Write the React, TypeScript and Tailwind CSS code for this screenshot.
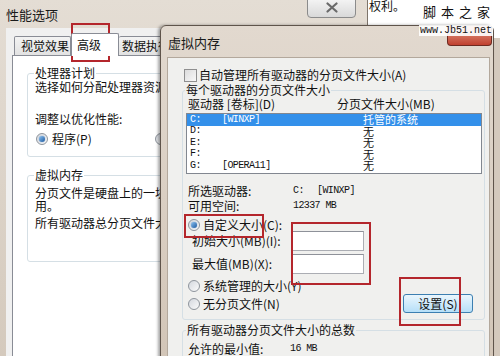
import React from 'react';

const cjk = "font-['Noto_Sans_CJK_SC','Noto_Sans_CJK_JP',sans-serif]";
const mono = "font-['Liberation_Mono','DejaVu_Sans_Mono',monospace] text-[10px] tracking-[-0.6px]";

const Radio = ({ checked = false }: { checked?: boolean }) => (
  <span className="flex h-[12px] w-[12px] shrink-0 items-center justify-center rounded-full border border-[#8e949c] bg-linear-to-br from-[#d4d8de] to-[#fbfbfb]">
    {checked && (
      <span className="h-[6px] w-[6px] rounded-full bg-linear-to-br from-[#8cc2f0] to-[#1b5aa0] shadow-[0_0_1px_#2a62a8]" />
    )}
  </span>
);

const Checkbox = () => (
  <span className="h-[13px] w-[13px] shrink-0 border border-[#8f8f8f] bg-linear-to-br from-[#dcdcdc] to-[#f8f8f8]" />
);

const GroupLabel = ({ children, bg }: { children: React.ReactNode; bg: string }) => (
  <div className={`-mt-[8px] flex h-[14px] w-fit items-center px-[1px] leading-none ${bg}`}>{children}</div>
);

const drives = [
  { d: 'C:', v: '[WINXP]', s: '托管的系统', sel: true },
  { d: 'D:', v: '', s: '无', sel: false },
  { d: 'E:', v: '', s: '无', sel: false },
  { d: 'F:', v: '', s: '无', sel: false },
  { d: 'G:', v: '[OPERA11]', s: '无', sel: false },
];

const PerformanceOptions = () => (
  <div className="absolute left-0 top-0 h-[380px] w-[368px] border-r border-[#7d746b] bg-linear-to-b from-[#e4ddd4] to-[#d3c8bb]">
    {/* title bar */}
    <div className="flex h-[28px] items-start justify-between">
      <span className="ml-[6px] mt-[8px] text-[13px] leading-none text-[#1a1a1a]">性能选项</span>
      <div className="-mt-[3px] mr-[11px] flex h-[21px] w-[49px] items-center justify-center rounded-b-[4px] border border-[#8b8b8b] bg-linear-to-b from-[#f6f6f6] to-[#d9d9d9]">
        <svg width="12" height="11" viewBox="0 0 12 11">
          <path d="M1.5 1.5 L10.5 9.5 M10.5 1.5 L1.5 9.5" stroke="#6a6a6a" strokeWidth="2.2" strokeLinecap="round" />
        </svg>
      </div>
    </div>
    {/* client */}
    <div className="ml-[6px] h-[360px] w-[355px] bg-[#f0f0f0] pt-[5px]">
      <div className="flex h-[22px] items-end pl-[8px]">
        <div className="flex h-[19px] w-[57px] items-center rounded-t-[2px] border border-b-0 border-[#898c95] bg-linear-to-b from-[#f3f3f3] to-[#e2e2e2] pl-[6px] leading-none">
          视觉效果
        </div>
        <div className="relative z-10 -mb-[1px] flex h-[23px] w-[48px] items-center rounded-t-[2px] border border-b-0 border-[#898c95] bg-white pl-[5px] leading-none">
          高级
        </div>
        <div className="flex h-[19px] w-[90px] items-center rounded-t-[2px] border border-b-0 border-l-0 border-[#898c95] bg-linear-to-b from-[#f3f3f3] to-[#e2e2e2] pl-[3px] leading-none whitespace-nowrap">
          数据执行保护
        </div>
      </div>
      <div className="ml-[6px] h-[320px] w-[345px] border border-[#898c95] bg-white">
        <div className="ml-[14px] mt-[17px] w-[316px] rounded-[3px] border border-[#d5dfe5] pb-[10px]">
          <div className="ml-[6px]">
            <GroupLabel bg="bg-white">处理器计划</GroupLabel>
          </div>
          <div className="ml-[7px] flex h-[14px] items-center leading-none whitespace-nowrap">选择如何分配处理器资源。</div>
          <div className="ml-[7px] mt-[18px] flex h-[14px] items-center leading-none">调整以优化性能:</div>
          <div className="ml-[8px] mt-[6px] flex h-[14px] items-center leading-none">
            <div className="flex w-[119px] items-center gap-[4px]">
              <Radio checked />
              <span>程序(P)</span>
            </div>
            <div className="flex items-center gap-[4px]">
              <Radio />
              <span>后台服务(S)</span>
            </div>
          </div>
        </div>
        <div className="ml-[14px] mt-[18px] w-[316px] rounded-[3px] border border-[#d5dfe5] pb-[31px]">
          <div className="ml-[6px]">
            <GroupLabel bg="bg-white">虚拟内存</GroupLabel>
          </div>
          <div className="ml-[7px] mt-[4px] flex h-[13px] items-center leading-none whitespace-nowrap">分页文件是硬盘上的一块区域，Windows 当作 RAM 使</div>
          <div className="ml-[7px] flex h-[13px] items-center leading-none">用。</div>
          <div className="ml-[7px] mt-[4px] flex h-[14px] items-center leading-none whitespace-nowrap">所有驱动器总分页文件大小:</div>
        </div>
      </div>
    </div>
  </div>
);

const VirtualMemory = () => (
  <div className="absolute left-[160px] top-[25px] h-[340px] w-[334px] rounded-t-[6px] border border-[#5f544b] bg-linear-to-b from-[#e2d9cf] to-[#d2c5b7] shadow-[-2px_0_3px_rgba(0,0,0,0.35)]">
    <div className="flex h-[31px] items-start justify-between">
      <span className="ml-[7px] mt-[10px] text-[13px] leading-none text-[#1a1a1a]">虚拟内存</span>
      <div className="mr-[1px] h-[20px] w-[45px] rounded-b-[4px] border border-t-0 border-[#6e2a20] bg-linear-to-b from-[#e39a88] to-[#c0402f]" />
    </div>
    <div className="ml-[6px] h-[310px] w-[323px] border border-[#b3a89c] bg-[#f0f0ee]">
      <div className="ml-[16px] mt-[10px] flex h-[14px] items-center gap-[2px] leading-none">
        <Checkbox />
        <span>自动管理所有驱动器的分页文件大小(A)</span>
      </div>

      <div className="ml-[14px] mt-[8px] w-[303px] rounded-[3px] border border-[#d5dfe5] pb-[6px]">
        <div className="ml-[2px]">
          <GroupLabel bg="bg-[#f0f0ee]">每个驱动器的分页文件大小</GroupLabel>
        </div>
        <div className="flex h-[14px] items-center pl-[5px] leading-none">
          <span className="w-[149px]">驱动器 [卷标](D)</span>
          <span>分页文件大小(MB)</span>
        </div>
        <div className="ml-[3px] mt-[2px] h-[61px] w-[296px] border border-[#828790] bg-white">
          {drives.map((r) => (
            <div
              key={r.d}
              className={`flex h-[11.5px] items-center leading-none ${r.sel ? 'bg-[#3390ea] text-white' : 'text-[#111]'}`}
            >
              <span className={`w-[35px] pl-[3px] ${mono}`}>{r.d}</span>
              <span className={`w-[141px] ${mono}`}>{r.v}</span>
              <span className="text-[11px]">{r.s}</span>
            </div>
          ))}
        </div>

        <div className="mt-[9px] flex h-[15px] items-center leading-none">
          <span className="w-[110px] pl-[5px]">所选驱动器:</span>
          <span className={`w-[24px] ${mono}`}>C:</span>
          <span className={mono}>[WINXP]</span>
        </div>
        <div className="flex h-[15px] items-center leading-none">
          <span className="w-[110px] pl-[5px]">可用空间:</span>
          <span className={mono}>12337 MB</span>
        </div>
        <div className="mt-[6px] flex h-[12px] items-center gap-[3px] pl-[5px] leading-none">
          <Radio checked />
          <span>自定义大小(C):</span>
        </div>
        <div className="flex h-[20px] items-center leading-none">
          <span className="w-[108px] pl-[9px]">初始大小(MB)(I):</span>
          <div className="h-[20px] w-[73px] border border-[#abadb3] border-t-[#8e9199] bg-white" />
        </div>
        <div className="mt-[3px] flex h-[20px] items-center leading-none">
          <span className="w-[108px] pl-[9px]">最大值(MB)(X):</span>
          <div className="h-[20px] w-[73px] border border-[#abadb3] border-t-[#8e9199] bg-white" />
        </div>
        <div className="mt-[5px] flex h-[14px] items-center gap-[3px] pl-[5px] leading-none">
          <Radio />
          <span>系统管理的大小(Y)</span>
        </div>
        <div className="mt-[1px] flex h-[19px] items-center pl-[5px] leading-none">
          <Radio />
          <span className="ml-[3px]">无分页文件(N)</span>
          <button className="ml-auto mr-[11px] flex h-[19px] w-[70px] items-center justify-center rounded-[3px] border border-[#3c7fb1] bg-linear-to-b from-[#eaf6fd] to-[#b6dff8] leading-none text-[#111]">
            设置(S)
          </button>
        </div>
      </div>

      <div className="ml-[14px] mt-[10px] w-[303px] rounded-[3px] border border-[#d5dfe5] pb-[10px]">
        <div className="ml-[3px]">
          <GroupLabel bg="bg-[#f0f0ee]">所有驱动器分页文件大小的总数</GroupLabel>
        </div>
        <div className="mt-[5px] flex h-[14px] items-center leading-none">
          <span className="w-[107px] pl-[5px]">允许的最小值:</span>
          <span className={mono}>16 MB</span>
        </div>
      </div>
    </div>
  </div>
);

export default function App() {
  return (
    <div className={`relative h-[356px] w-[500px] overflow-hidden bg-white text-[12px] text-[#111] ${cjk}`}>
      <PerformanceOptions />
      <span className="absolute left-[369px] top-0 leading-none">权利。</span>
      <div className="absolute left-[494px] top-[38px] h-[318px] w-[6px] bg-[#d4c9bd]" />
      <VirtualMemory />

      {/* watermark */}
      <span className="absolute left-[423px] top-[5px] text-[13px] leading-none tracking-[5px] text-[#111]">脚本之家</span>
      <span className="absolute left-[419px] top-[25px] h-[11px] bg-white/90 px-[1px] font-['Liberation_Mono',monospace] text-[10px] leading-[11px] text-[#111]">
        www.Jb51.net
      </span>

      {/* red annotation boxes */}
      <div className="absolute left-[71px] top-[23px] h-[39px] w-[39px] border-2 border-[#b4262c]" />
      <div className="absolute left-[184px] top-[214px] h-[24px] w-[80px] border-2 border-[#b4262c]" />
      <div className="absolute left-[291px] top-[222px] h-[63px] w-[80px] border-2 border-[#b4262c]" />
      <div className="absolute left-[399px] top-[277px] h-[49px] w-[62px] border-2 border-[#b4262c]" />
    </div>
  );
}
